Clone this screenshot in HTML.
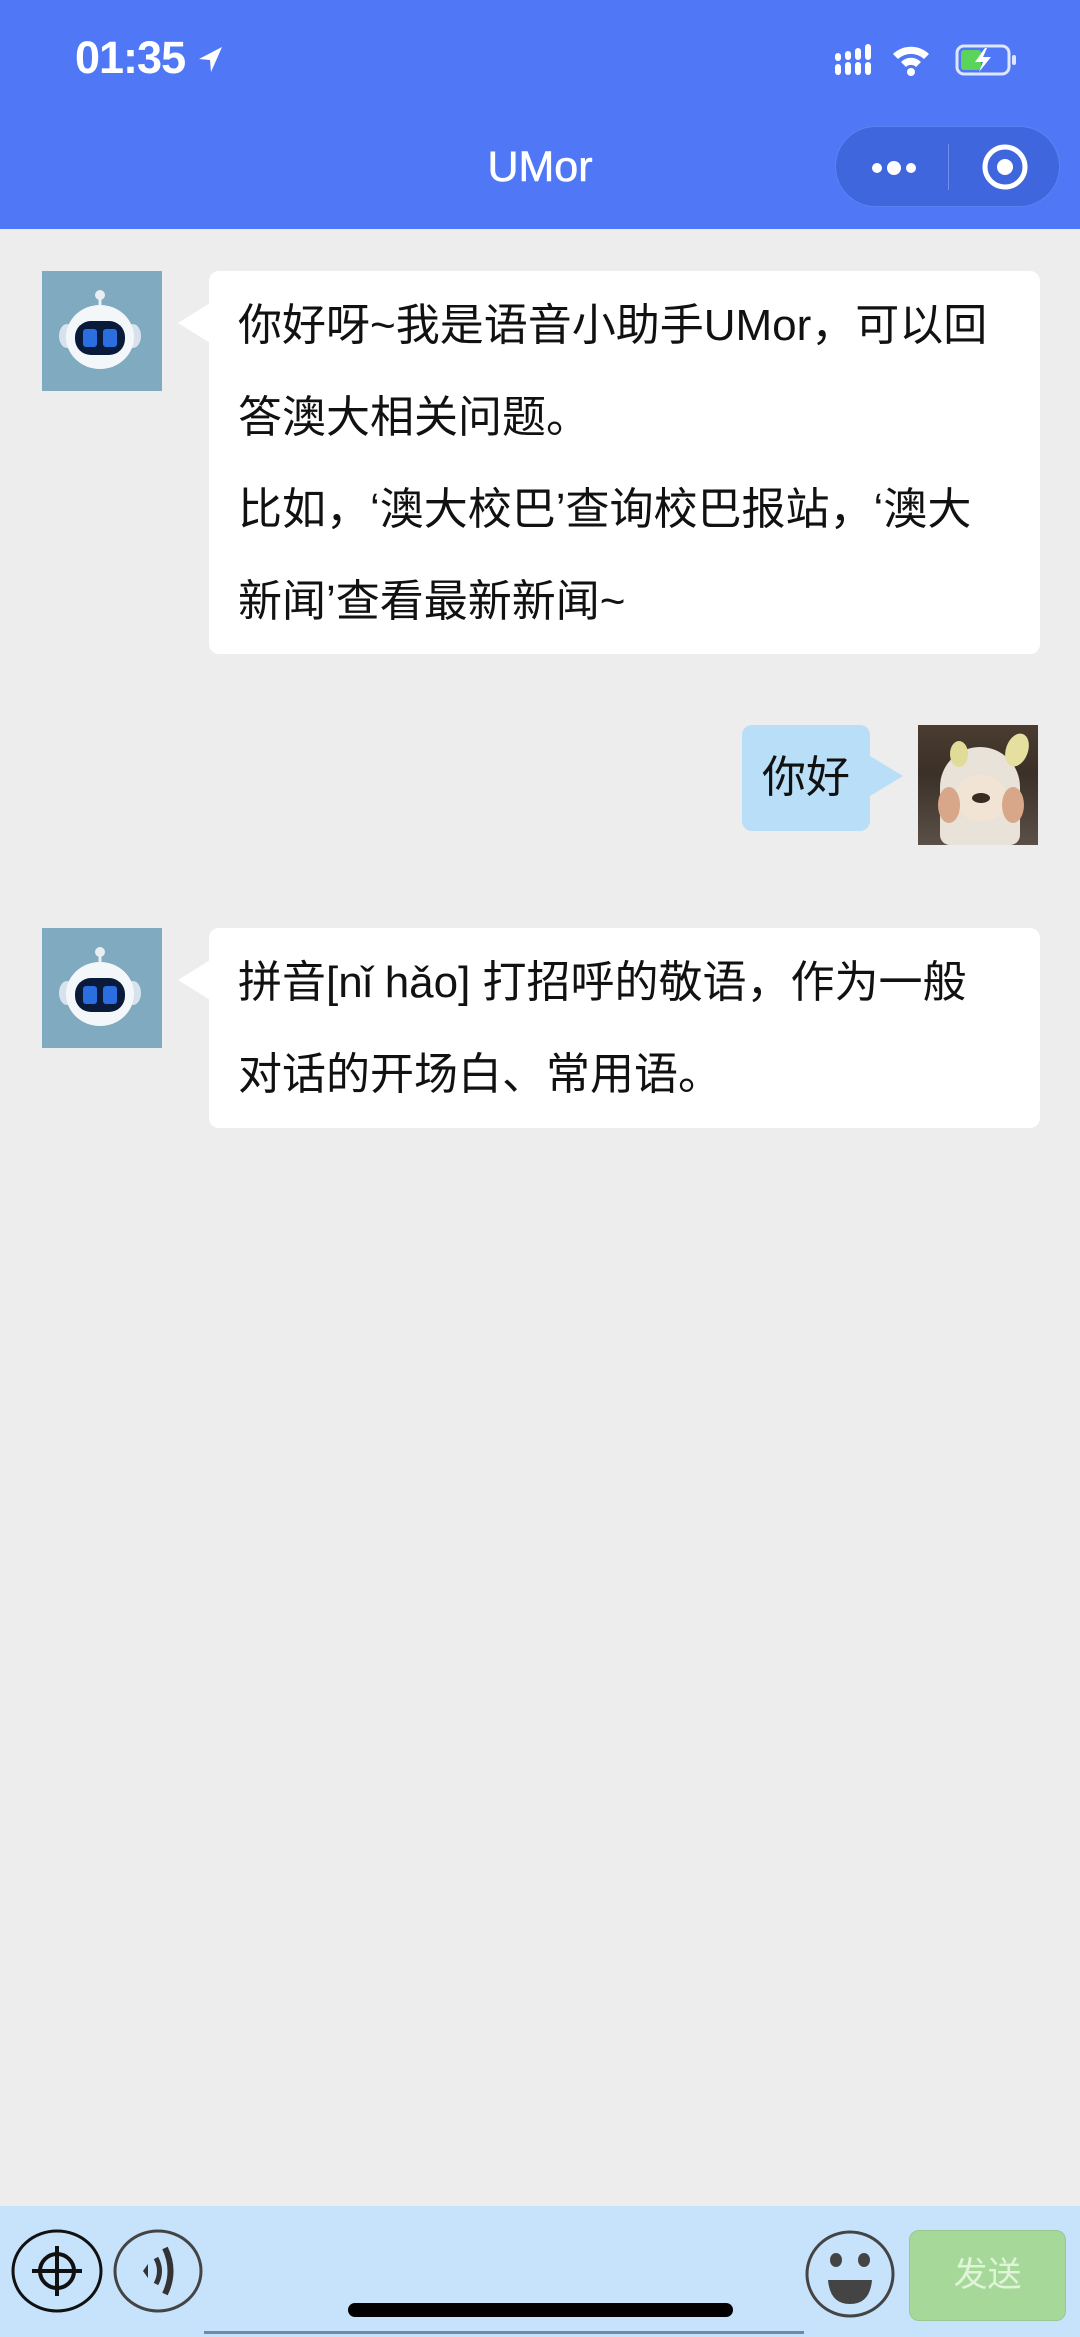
<!DOCTYPE html>
<html><head><meta charset="utf-8"><style>
body{margin:0;width:1080px;height:2337px;background:#ededed;position:relative;overflow:hidden;font-family:"Liberation Sans","Noto Sans CJK SC",sans-serif}
.a{position:absolute}
.hdr{left:0;top:0;width:1080px;height:229px;background:#5078f6}
.bub{background:#fff;border-radius:10px;color:#111;font-size:44px;line-height:92px;padding:0 0 0 29px;box-sizing:border-box}
.tail{width:0;height:0;border-top:20px solid transparent;border-bottom:20px solid transparent}
.av{width:120px;height:120px;background:#7faabf}
</style></head><body>
<div class="a hdr"></div>
<div class="a" style="left:75px;top:32px;color:#fff;font-size:45px;font-weight:bold;letter-spacing:-1px">01:35</div>
<svg class="a" style="left:196px;top:44px" width="30" height="32" viewBox="0 0 30 32"><path d="M26 3 L3 15 L14 16 L15 28 Z" fill="#fff"/></svg>
<svg class="a" style="left:833px;top:42px" width="190" height="36" viewBox="0 0 190 36">
<g fill="#fff"><rect x="2" y="22" width="6" height="11" rx="3"/><rect x="2" y="11" width="6" height="8" rx="3"/><rect x="12" y="20" width="6" height="13" rx="3"/><rect x="12" y="9" width="6" height="9" rx="3"/><rect x="22" y="20" width="6" height="13" rx="3"/><rect x="22" y="6" width="6" height="12" rx="3"/><rect x="32" y="20" width="6" height="13" rx="3"/><rect x="32" y="2" width="6" height="16" rx="3"/>
<path d="M60 12 A26 26 0 0 1 96 12 L91 17 A19 19 0 0 0 65 17Z"/><path d="M68 20 A14 14 0 0 1 88 20 L83 25 A7 7 0 0 0 73 25Z"/><circle cx="78" cy="30" r="4"/></g>
<rect x="124" y="4" width="52" height="28" rx="7" fill="none" stroke="#dfe6ff" stroke-width="3"/><rect x="128" y="8" width="20" height="20" rx="3" fill="#5ad45a"/><rect x="179" y="13" width="4" height="10" rx="2" fill="#dfe6ff"/><path d="M152 6 L142 20 L150 20 L146 30 L158 15 L150 15 L154 6Z" fill="#fff"/></svg>
<div class="a" style="left:0;width:1080px;top:140px;text-align:center;color:#fff;font-size:43px;line-height:54px;-webkit-text-stroke:0.6px #fff">UMor</div>
<div class="a" style="left:835px;top:126px;width:225px;height:81px;border-radius:41px;background:#4066de;border:1px solid #5a82f0;box-sizing:border-box"></div>
<div class="a" style="left:948px;top:144px;width:1px;height:46px;background:#6f8fea"></div>
<svg class="a" style="left:865px;top:150px" width="60" height="36"><circle cx="12" cy="18" r="5" fill="#fff"/><circle cx="29" cy="18" r="7" fill="#fff"/><circle cx="46" cy="18" r="5" fill="#fff"/></svg>
<svg class="a" style="left:980px;top:142px" width="50" height="50"><circle cx="25" cy="25" r="20" fill="none" stroke="#fff" stroke-width="5"/><circle cx="25" cy="25" r="8" fill="#fff"/></svg>

<div class="a av" style="left:42px;top:271px"><svg width="120" height="120" viewBox="0 0 120 120"><line x1="58" y1="26" x2="58" y2="38" stroke="#e8eef4" stroke-width="3"/><circle cx="58" cy="24" r="5" fill="#e8eef4"/><ellipse cx="25" cy="65" rx="8" ry="12" fill="#d8e2ec"/><ellipse cx="91" cy="65" rx="8" ry="12" fill="#d8e2ec"/><ellipse cx="58" cy="66" rx="34" ry="32" fill="#f4f7fa"/><rect x="33" y="50" width="50" height="34" rx="16" fill="#0a1a3a"/><rect x="41" y="58" width="14" height="18" rx="3" fill="#2a6ee0"/><rect x="61" y="58" width="14" height="18" rx="3" fill="#2a6ee0"/></svg></div>
<div class="a tail" style="left:178px;top:303px;border-right:32px solid #fff"></div>
<div class="a bub" style="left:209px;top:271px;width:831px;height:383px"></div>
<div class="a" style="left:238px;top:280px;width:790px;font-size:44px;line-height:92px;color:#111">你好呀~我是语音小助手UMor，可以回<br>答澳大相关问题。<br>比如，‘澳大校巴’查询校巴报站，‘澳大<br>新闻’查看最新新闻~</div>

<div class="a" style="left:742px;top:725px;width:128px;height:106px;background:#b9def8;border-radius:10px;font-size:44px;line-height:106px;text-align:center;color:#111">你好</div>
<div class="a tail" style="left:870px;top:756px;border-left:33px solid #b9def8"></div>
<div class="a" style="left:918px;top:725px;width:120px;height:120px;background:linear-gradient(#4a3c30,#3b3028 40%,#5a5048);overflow:hidden">
<div class="a" style="left:22px;top:22px;width:80px;height:98px;border-radius:40px 40px 10px 10px;background:#e8e2d8"></div>
<div class="a" style="left:88px;top:8px;width:22px;height:34px;border-radius:50%;background:#e6e0a0;transform:rotate(20deg)"></div>
<div class="a" style="left:32px;top:16px;width:18px;height:26px;border-radius:50%;background:#e0dc98"></div>
<div class="a" style="left:38px;top:50px;width:50px;height:46px;border-radius:45%;background:#f1e4d4"></div>
<div class="a" style="left:20px;top:62px;width:22px;height:36px;border-radius:50%;background:#d8a688"></div>
<div class="a" style="left:84px;top:62px;width:22px;height:36px;border-radius:50%;background:#d8a688"></div>
<div class="a" style="left:54px;top:68px;width:18px;height:10px;border-radius:50%;background:#3a2a22"></div>
</div>

<div class="a av" style="left:42px;top:928px"><svg width="120" height="120" viewBox="0 0 120 120"><line x1="58" y1="26" x2="58" y2="38" stroke="#e8eef4" stroke-width="3"/><circle cx="58" cy="24" r="5" fill="#e8eef4"/><ellipse cx="25" cy="65" rx="8" ry="12" fill="#d8e2ec"/><ellipse cx="91" cy="65" rx="8" ry="12" fill="#d8e2ec"/><ellipse cx="58" cy="66" rx="34" ry="32" fill="#f4f7fa"/><rect x="33" y="50" width="50" height="34" rx="16" fill="#0a1a3a"/><rect x="41" y="58" width="14" height="18" rx="3" fill="#2a6ee0"/><rect x="61" y="58" width="14" height="18" rx="3" fill="#2a6ee0"/></svg></div>
<div class="a tail" style="left:178px;top:960px;border-right:32px solid #fff"></div>
<div class="a bub" style="left:209px;top:928px;width:831px;height:200px"></div>
<div class="a" style="left:238px;top:937px;width:790px;font-size:44px;line-height:92px;color:#111">拼音[nǐ hǎo] 打招呼的敬语，作为一般<br>对话的开场白、常用语。</div>

<div class="a" style="left:0;top:2206px;width:1080px;height:131px;background:#c7e2fb"></div>
<svg class="a" style="left:10px;top:2228px" width="200" height="94">
<ellipse cx="47" cy="43" rx="44" ry="40" fill="none" stroke="#111" stroke-width="3"/><circle cx="47" cy="43" r="17" fill="none" stroke="#111" stroke-width="4"/><line x1="47" y1="18" x2="47" y2="68" stroke="#111" stroke-width="4"/><line x1="22" y1="43" x2="72" y2="43" stroke="#111" stroke-width="4"/>
<ellipse cx="148" cy="43" rx="43" ry="40" fill="none" stroke="#444" stroke-width="3"/><path d="M138 36 L133 43 L138 50Z" fill="#333"/><path d="M146 30 Q153 43 146 56" fill="none" stroke="#333" stroke-width="5"/><path d="M155 20 Q166 43 155 66" fill="none" stroke="#333" stroke-width="6"/></svg>
<svg class="a" style="left:802px;top:2228px" width="96" height="96"><ellipse cx="48" cy="46" rx="43" ry="42" fill="none" stroke="#444" stroke-width="3"/><ellipse cx="34" cy="32" rx="6" ry="7" fill="#444"/><ellipse cx="62" cy="32" rx="6" ry="7" fill="#444"/><path d="M26 52 L70 52 Q68 76 48 76 Q28 76 26 52Z" fill="#444"/></svg>
<div class="a" style="left:909px;top:2230px;width:157px;height:91px;background:#a6d89a;border-radius:10px;border:1px solid #98c890;box-sizing:border-box;color:#e0f4da;font-size:34px;line-height:89px;text-align:center">发送</div>
<div class="a" style="left:348px;top:2303px;width:385px;height:14px;border-radius:7px;background:#000"></div>
<div class="a" style="left:204px;top:2331px;width:600px;height:3px;background:#6f8aa8"></div>
</body></html>
